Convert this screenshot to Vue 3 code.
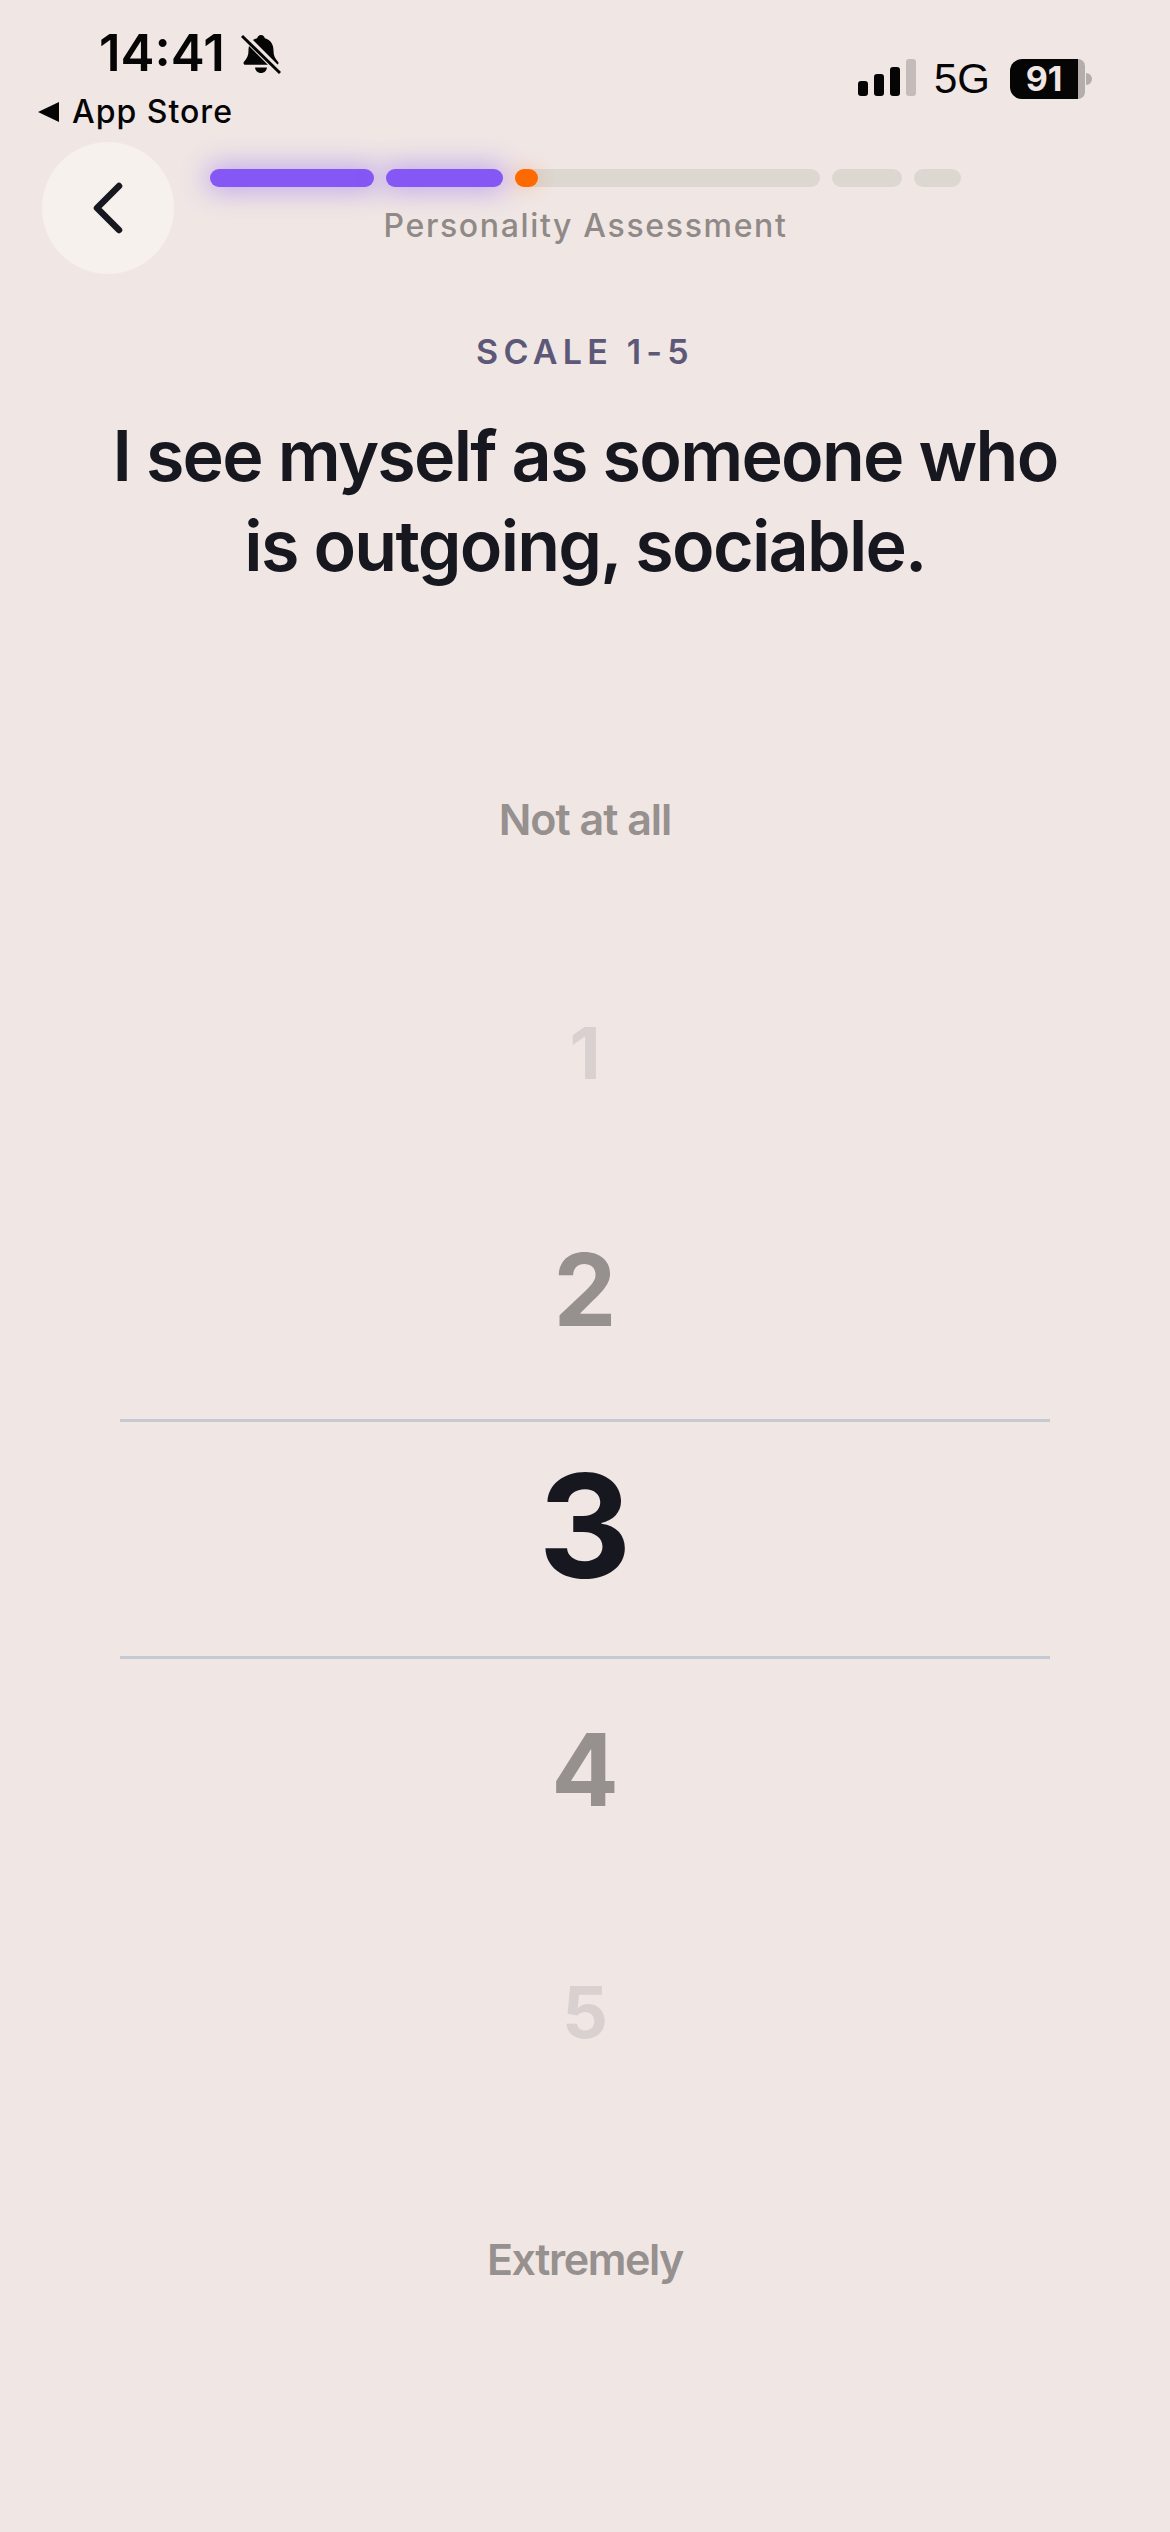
<template>
  <main class="screen">
    <header class="status">
      <div class="status-left">
        <div class="clock">
          <span class="time">14:41</span>
          <svg class="bell" viewBox="0 0 40 42" width="40" height="42">
            <path d="M20 2c2 0 3.500 1.400 3.800 3.200 6 1.500 8.700 6.300 8.700 12.300 0 5 1.400 8 4.500 11.300 1 1.100.3 3-1.300 3H4.300c-1.600 0-2.300-1.900-1.300-3C6 25.500 7.500 22.500 7.500 17.500c0-6 2.700-10.800 8.700-12.300C16.500 3.400 18 2 20 2z" fill="#050505" />
            <path d="M14 34.500h12c-.4 3.300-2.800 5.500-6 5.500s-5.600-2.200-6-5.500z" fill="#050505" />
            <path d="M2 2l37 37" stroke="#f0e6e4" stroke-width="7" fill="none" />
            <path d="M1 3l38 37" stroke="#050505" stroke-width="3" fill="none" />
          </svg>
        </div>
        <div class="back-app">
          <svg viewBox="0 0 22 22" width="22" height="22"><path d="M0 11L21 1v20z" fill="#050505" /></svg>
          <span>App Store</span>
        </div>
      </div>
      <div class="status-right">
        <div class="signal">
          <i v-for="bar in signalBars" :key="bar.height" :class="{ off: bar.off }" :style="{ height: bar.height + 'px' }"></i>
        </div>
        <span class="network">5G</span>
        <div class="battery">
          <span class="battery-fill">91</span>
          <span class="battery-rest"></span>
          <span class="battery-cap"></span>
        </div>
      </div>
    </header>

    <section class="topbar">
      <button class="back" type="button" aria-label="Back">
        <svg viewBox="0 0 34 56" width="34" height="56">
          <path d="M28 6L6 28l22 22" fill="none" stroke="#17171f" stroke-width="6.500" stroke-linecap="round" stroke-linejoin="round" />
        </svg>
      </button>
      <div class="progress-wrap">
        <div class="progress">
          <span class="seg done seg-a"></span>
          <span class="seg done seg-b"></span>
          <span class="seg seg-c"><b></b></span>
          <span class="seg seg-d"></span>
          <span class="seg seg-e"></span>
        </div>
        <p class="label">Personality Assessment</p>
      </div>
    </section>

    <p class="scale">SCALE 1-5</p>
    <h1 class="question">I see myself as someone who<br />is outgoing, sociable.</h1>

    <p class="end end-top">Not at all</p>

    <div class="picker">
      <div v-for="item in options" :key="item.value" class="option" :class="item.cls">{{ item.value }}</div>
    </div>

    <p class="end end-bottom">Extremely</p>
  </main>
</template>

<script setup>
const signalBars = [
  { height: 15 },
  { height: 22 },
  { height: 29 },
  { height: 37, off: true }
]

const options = [
  { value: 1, cls: 'far' },
  { value: 2, cls: 'near' },
  { value: 3, cls: 'active' },
  { value: 4, cls: 'near below' },
  { value: 5, cls: 'far below' }
]
</script>

<style>
html,
body {
  margin: 0;
  background: #f0e6e4;
}
</style>

<style scoped>
.screen {
  width: 1170px;
  height: 2532px;
  overflow: hidden;
  background: #f0e6e4;
  font-family: Inter, "Liberation Sans", sans-serif;
  color: #17171f;
}

.status {
  height: 142px;
  display: flex;
  justify-content: space-between;
  box-sizing: border-box;
}

.status-left {
  padding: 24px 0 0 38px;
}

.clock {
  display: flex;
  align-items: center;
  gap: 16px;
  padding-left: 61px;
  height: 58px;
}

.time {
  font-size: 51px;
  font-weight: 600;
  color: #050505;
  line-height: 58px;
}

.bell {
  margin-top: 2px;
}

.back-app {
  display: flex;
  align-items: center;
  gap: 12px;
  margin-top: 10px;
  font-size: 32px;
  font-weight: 500;
  letter-spacing: 1px;
  line-height: 40px;
  color: #050505;
}

.status-right {
  display: flex;
  align-items: flex-start;
  padding: 59px 78px 0 0;
}

.signal {
  display: flex;
  align-items: flex-end;
  gap: 6px;
  height: 37px;
  margin-right: 18px;
}

.signal i {
  width: 10px;
  border-radius: 3px;
  background: #050505;
}

.signal i.off {
  background: #c4bcbb;
}

.network {
  font-size: 42px;
  font-weight: 400;
  line-height: 40px;
  color: #050505;
  margin-right: 20px;
  font-family: "Liberation Sans", sans-serif;
}

.battery {
  display: flex;
  align-items: center;
  height: 40px;
}

.battery-fill {
  width: 68px;
  height: 40px;
  border-radius: 12px 0 0 12px;
  background: #050505;
  color: #f0e6e4;
  font-size: 34px;
  font-weight: 700;
  line-height: 40px;
  text-align: center;
}

.battery-rest {
  width: 7px;
  height: 40px;
  border-radius: 0 10px 10px 0;
  background: #b5adac;
}

.battery-cap {
  width: 6px;
  height: 12px;
  margin-left: 1px;
  border-radius: 0 6px 6px 0;
  background: #b5adac;
}

.topbar {
  display: grid;
  grid-template-columns: 210px 1fr 210px;
  height: 132px;
}

.back {
  width: 132px;
  height: 132px;
  margin-left: 42px;
  padding: 0;
  border: 0;
  border-radius: 50%;
  background: #f6f1ec;
  display: flex;
  align-items: center;
  justify-content: center;
}

.progress-wrap {
  padding-top: 27px;
}

.progress {
  display: flex;
  gap: 12px;
}

.seg {
  height: 18px;
  border-radius: 9px;
  background: #dcd7d1;
}

.seg.done {
  background: #8558f5;
  box-shadow: 0 0 26px 4px rgba(133, 88, 245, 0.45);
}

.seg-a { width: 164px; }
.seg-b { width: 117px; }
.seg-c { width: 305px; }
.seg-d { width: 70px; }
.seg-e { width: 47px; }

.seg-c b {
  display: block;
  width: 23px;
  height: 18px;
  border-radius: 9px;
  background: #ff6a00;
  box-shadow: 0 0 16px 4px rgba(255, 106, 0, 0.14);
}

.label {
  margin: 19px 0 0;
  text-align: center;
  font-size: 32px;
  line-height: 40px;
  font-weight: 500;
  letter-spacing: 1.65px;
  color: #8f8987;
}

.scale {
  margin: 58px 0 0;
  text-align: center;
  font-size: 34px;
  line-height: 40px;
  font-weight: 600;
  letter-spacing: 5.2px;
  color: #5d5878;
}

.question {
  margin: 39px 0 0;
  text-align: center;
  font-size: 70px;
  line-height: 90px;
  font-weight: 600;
  letter-spacing: -1.75px;
  color: #17171f;
}

.end {
  margin: 0;
  text-align: center;
  font-size: 43px;
  line-height: 50px;
  font-weight: 600;
  letter-spacing: -1px;
  color: #96908e;
}

.end-top {
  margin-top: 203px;
}

.picker {
  margin: 0 120px;
  margin-top: 101px;
}

.option {
  height: 237px;
  box-sizing: border-box;
  display: flex;
  align-items: center;
  justify-content: center;
  font-weight: 700;
  padding-bottom: 22px;
}

.option.below {
  height: 242px;
  padding-bottom: 22px;
}

.far {
  font-size: 72px;
  color: #d9d1cf;
}

.near {
  font-size: 100px;
  color: #96908e;
}

.active {
  height: 240px;
  font-size: 144px;
  color: #17171f;
  border-top: 3px solid #c5c9d3;
  border-bottom: 3px solid #c5c9d3;
  padding-bottom: 28px;
}

.end-bottom {
  margin-top: 91px;
  letter-spacing: -1.45px;
}
</style>
